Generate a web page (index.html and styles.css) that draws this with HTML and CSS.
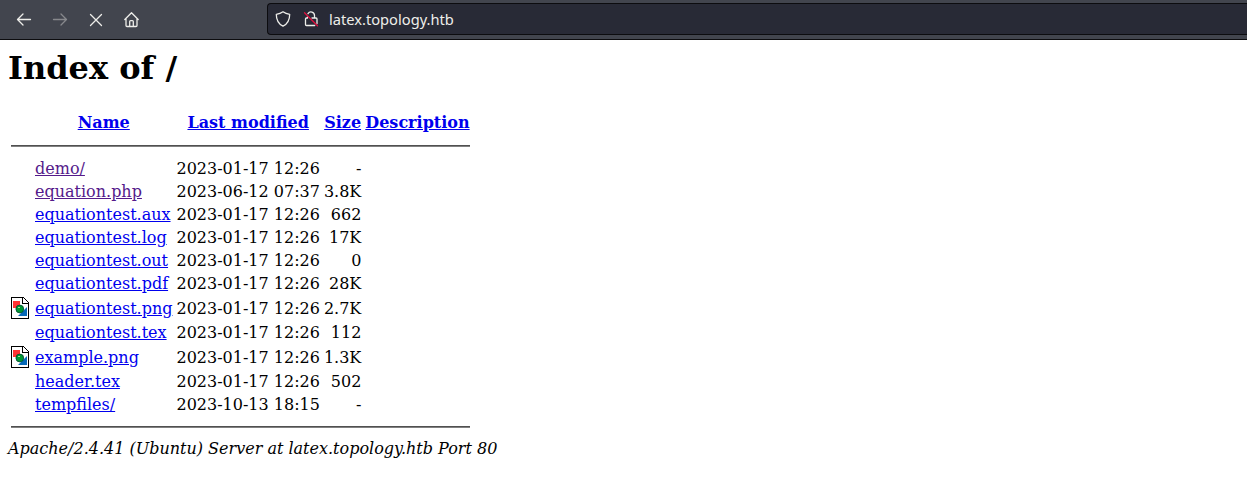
FILE: index.html
```html
<!DOCTYPE html>
<html lang="en">
<head>
<meta charset="utf-8">
<title>Index of /</title>
<link rel="stylesheet" href="styles.css">
</head>
<body>
<svg class="defs" width="0" height="0" aria-hidden="true">
<symbol id="image-icon" viewBox="0 0 20 22">
<path d="M.5.500h12l5 5v16h-17z" fill="#fff" stroke="#000" shape-rendering="crispEdges"/>
<path d="M11.500 1v5h6" fill="#fff" stroke="#000" shape-rendering="crispEdges"/>
<path d="M2 4h7v7H2z" fill="#f33"/>
<path d="M16 10v9H7z" fill="#0669b8"/>
<circle cx="8.800" cy="12" r="3.900" fill="#093" stroke="#043" stroke-width=".8"/>
<path d="M7 10.500h2" stroke="#9d9"/>
</symbol>
</svg>
<header class="toolbar">
<nav class="buttons">
<svg viewBox="0 0 16 16"><path d="M14.500 7.500H1.500M7 2 1.500 7.500 7 13"/></svg>
<svg class="disabled" viewBox="0 0 16 16"><path d="M1.500 7.500h13M9 2l5.500 5.500L9 13"/></svg>
<svg viewBox="0 0 16 16"><path d="m2.500 2.500 11 11M13.500 2.500l-11 11"/></svg>
<svg viewBox="0 0 16 16"><path d="M.8 7.500 7.500.8 14.200 7.500M2 6.800v6.700q0 1 1 1h9q1 0 1-1V6.800M5.700 14.300v-4.800q0-.9.900-.9h1.800q.9 0 .9.900v4.800"/></svg>
</nav>
<div class="address">
<svg viewBox="0 0 16 16"><path d="M8 .8c2 1.500 4.200 2.200 6.700 2.500C14.700 9 12.700 13 8 15.200 3.300 13 1.300 9 1.300 3.300 3.800 3 6 2.300 8 .8z"/></svg>
<svg viewBox="0 0 16 16"><path d="M5 2.700A3.500 3.500 0 0 1 11.500 4.500V7M4.500 5.800V7M9 7h4q1 0 1 1v4.500M11.700 14.500H3.500q-1 0-1-1V8q0-1 1-1h1"/><path class="slash" d="m1.500 1.800 13 13"/></svg>
<span>latex.topology.htb</span>
</div>
</header>
<main>
<h1>Index of /</h1>
<table>
<tr><th class="icon"></th><th><a href="#">Name</a></th><th><a href="#">Last modified</a></th><th><a href="#">Size</a></th><th><a href="#">Description</a></th></tr>
<tr><th colspan="5"><hr></th></tr>
<tr><td></td><td><a class="visited" href="#">demo/</a></td><td>2023-01-17 12:26</td><td class="size">-</td><td></td></tr>
<tr><td></td><td><a class="visited" href="#">equation.php</a></td><td>2023-06-12 07:37</td><td class="size">3.8K</td><td></td></tr>
<tr><td></td><td><a href="#">equationtest.aux</a></td><td>2023-01-17 12:26</td><td class="size">662</td><td></td></tr>
<tr><td></td><td><a href="#">equationtest.log</a></td><td>2023-01-17 12:26</td><td class="size">17K</td><td></td></tr>
<tr><td></td><td><a href="#">equationtest.out</a></td><td>2023-01-17 12:26</td><td class="size">0</td><td></td></tr>
<tr><td></td><td><a href="#">equationtest.pdf</a></td><td>2023-01-17 12:26</td><td class="size">28K</td><td></td></tr>
<tr><td><svg class="file"><use href="#image-icon"/></svg></td><td><a href="#">equationtest.png</a></td><td>2023-01-17 12:26</td><td class="size">2.7K</td><td></td></tr>
<tr><td></td><td><a href="#">equationtest.tex</a></td><td>2023-01-17 12:26</td><td class="size">112</td><td></td></tr>
<tr><td><svg class="file"><use href="#image-icon"/></svg></td><td><a href="#">example.png</a></td><td>2023-01-17 12:26</td><td class="size">1.3K</td><td></td></tr>
<tr><td></td><td><a href="#">header.tex</a></td><td>2023-01-17 12:26</td><td class="size">502</td><td></td></tr>
<tr><td></td><td><a href="#">tempfiles/</a></td><td>2023-10-13 18:15</td><td class="size">-</td><td></td></tr>
<tr><th colspan="5"><hr></th></tr>
</table>
<address>Apache/2.4.41 (Ubuntu) Server at latex.topology.htb Port 80</address>
</main>
</body>
</html>
```
FILE: styles.css
```css
body {
  margin: 0;
  background: #fff;
  color: #000;
  font: 16px "DejaVu Serif", serif;
}
.defs { display: block; }
.toolbar {
  box-sizing: border-box;
  height: 40px;
  display: flex;
  background: #42454e;
  border-bottom: 1px solid #0c0c0f;
}
.buttons {
  display: flex;
  gap: 20px;
  width: 267px;
  box-sizing: border-box;
  padding: 12px 0 0 16px;
}
.toolbar svg {
  width: 16px;
  height: 16px;
  fill: none;
  stroke: #eeeeea;
  stroke-width: 1.3;
  stroke-linecap: round;
  stroke-linejoin: round;
}
.toolbar .disabled { opacity: .4; }
.toolbar .slash { stroke: #e2103f; }
.address {
  box-sizing: border-box;
  flex: 1;
  height: 32px;
  margin-top: 3px;
  padding-left: 7px;
  display: flex;
  align-items: center;
  gap: 12px;
  background: #282a36;
  border: 1px solid #0c0c0f;
  border-right: 0;
  border-radius: 4px 0 0 4px;
  color: #eeeeea;
  font: 14.67px "Noto Sans", sans-serif;
}
.address span { margin-left: -2px; }
main { padding: 9px 8px 0; }
h1 {
  margin: 0 0 21px;
  font-size: 32px;
  line-height: 38px;
}
table { border-spacing: 2px; }
td, th { padding: 1px; white-space: nowrap; line-height: 19px; }
.icon { width: 20px; height: 22px; }
.size { text-align: right; }
.file { display: block; width: 20px; height: 22px; }
hr {
  margin: 8px 0;
  border: 0;
  border-top: 1px solid #505050;
  border-bottom: 1px solid #808080;
}
a { color: #00e; }
.visited { color: #551a8b; }
```
